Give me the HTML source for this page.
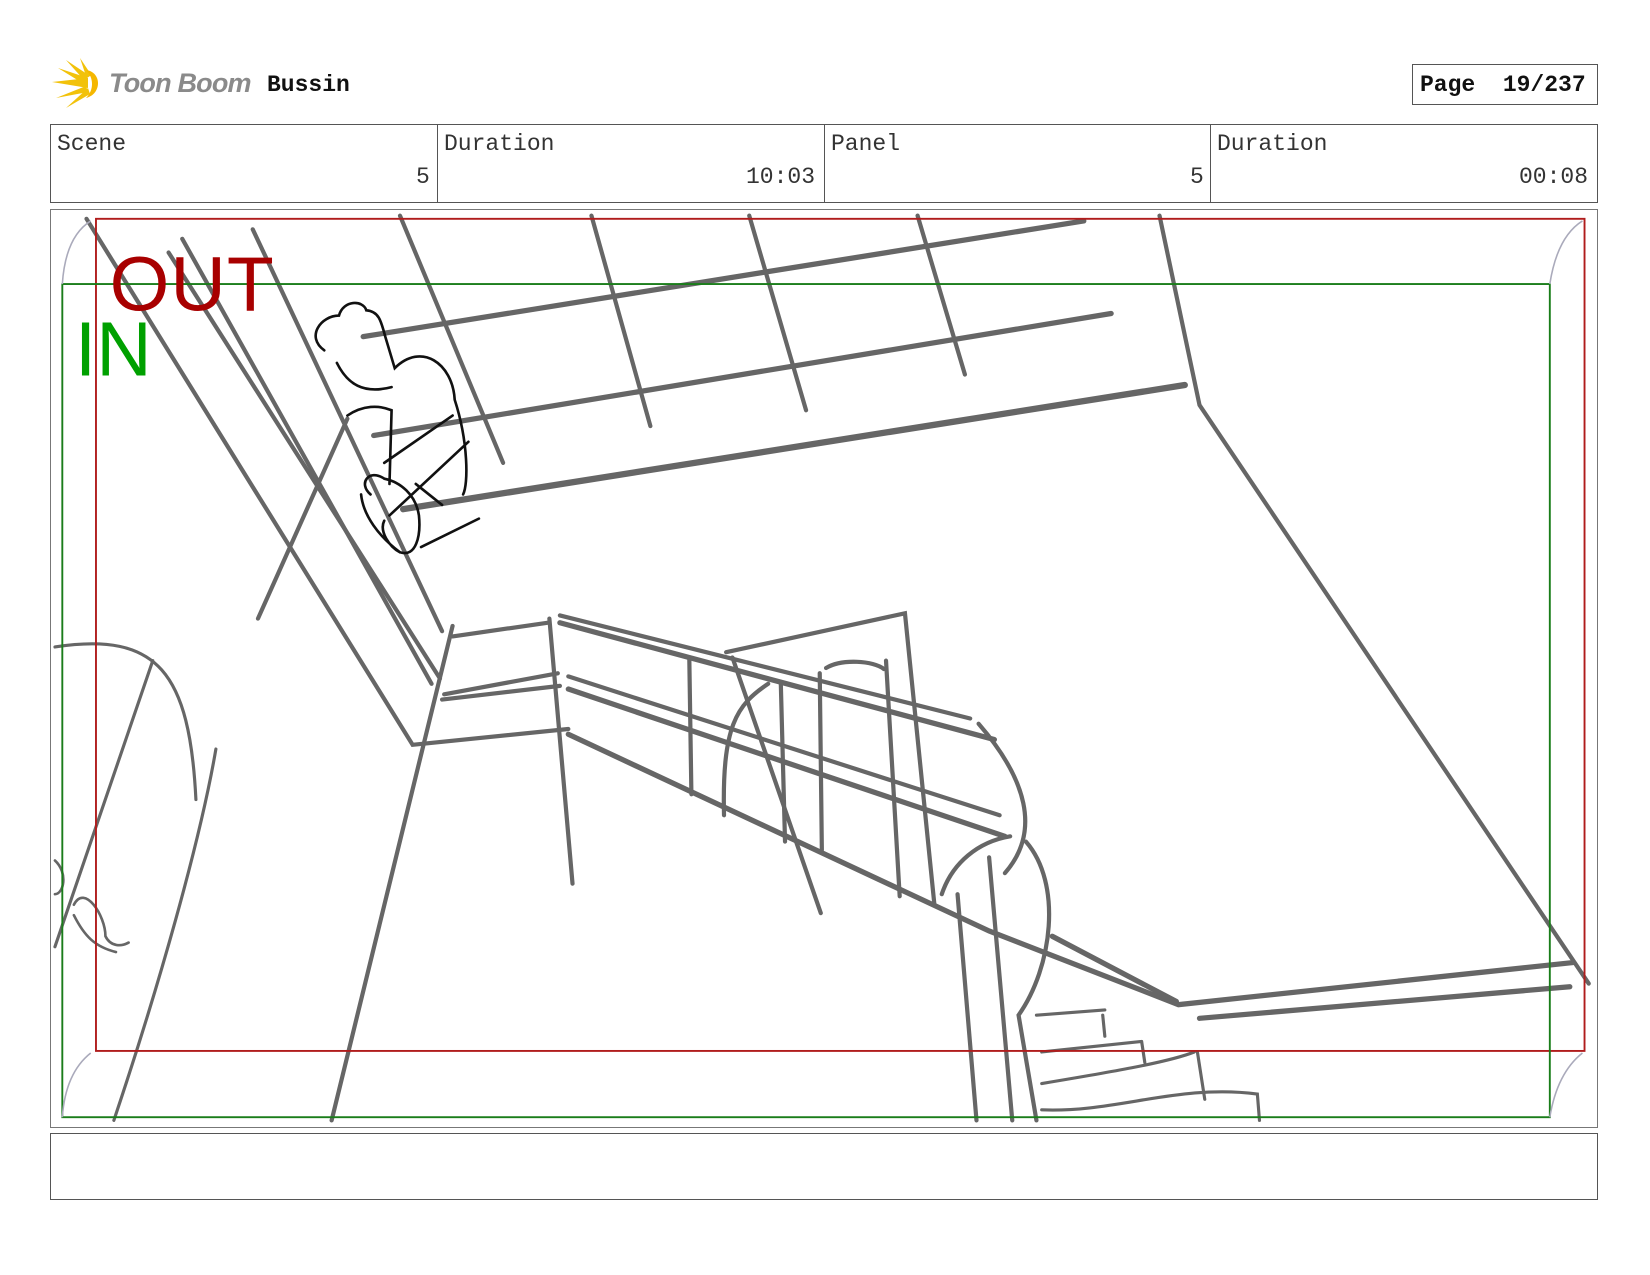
<!DOCTYPE html>
<html><head><meta charset="utf-8"><style>
body{margin:0;width:1650px;height:1275px;background:#fff;position:relative;overflow:hidden;font-family:"Liberation Mono",monospace}
.a{position:absolute}
.box{position:absolute;border:1px solid #555;box-sizing:border-box}
.lbl{position:absolute;font-size:23px;color:#333}
</style></head><body>
<svg class="a" style="left:52px;top:58px" width="52" height="54" viewBox="0 0 52 54">
<g fill="#f2c20a"><polygon points="0,24 36,20 36,30"/><polygon points="6,10 36,20 32,26"/><polygon points="14,2 38,18 32,22"/><polygon points="4,40 34,28 36,34"/><polygon points="14,50 36,30 38,36"/><polygon points="28,0 40,18 34,18"/></g>
<path d="M34 12 C50 14 50 36 34 40 C42 32 42 20 34 12Z" fill="#f5b700"/>
</svg>
<div class="a" style="left:109px;top:68px;font-family:'Liberation Sans',sans-serif;font-style:italic;font-weight:bold;font-size:27px;color:#8a8a8a;letter-spacing:-0.8px">Toon Boom</div>
<div class="a" style="left:267px;top:72px;font-size:23px;font-weight:bold;color:#111">Bussin</div>
<div class="box" style="left:1412px;top:64px;width:186px;height:41px"></div>
<div class="a" style="left:1420px;top:72px;font-size:23px;font-weight:bold;color:#111">Page&nbsp;&nbsp;19/237</div>
<div class="box" style="left:50px;top:124px;width:1548px;height:79px"></div>
<div class="a" style="left:437px;top:124px;width:1px;height:79px;background:#555"></div>
<div class="a" style="left:824px;top:124px;width:1px;height:79px;background:#555"></div>
<div class="a" style="left:1210px;top:124px;width:1px;height:79px;background:#555"></div>
<div class="lbl" style="left:57px;top:131px">Scene</div>
<div class="lbl" style="left:444px;top:131px">Duration</div>
<div class="lbl" style="left:831px;top:131px">Panel</div>
<div class="lbl" style="left:1217px;top:131px">Duration</div>
<div class="lbl" style="left:416px;top:164px">5</div>
<div class="lbl" style="left:746px;top:164px">10:03</div>
<div class="lbl" style="left:1190px;top:164px">5</div>
<div class="lbl" style="left:1519px;top:164px">00:08</div>
<div class="box" style="left:50px;top:209px;width:1548px;height:919px;border-color:#777"></div>
<div class="box" style="left:50px;top:1133px;width:1548px;height:67px"></div>
<svg class="a" style="left:0;top:0" width="1650" height="1275" viewBox="0 0 1568 1212">
<defs><clipPath id="c"><rect x="49" y="199" width="1469" height="871"/></clipPath></defs>
<g clip-path="url(#c)" fill="none" stroke="#666" stroke-width="4" stroke-linecap="round">
<path d="M82 208 L392 708 L540 693"/>
<path d="M173 227 L410 650"/><path d="M160 240 L418 645"/><path d="M240 218 L420 600"/>
<path d="M380 205 L478 440"/><path d="M562 205 L618 405"/><path d="M712 205 L766 390"/><path d="M872 205 L917 356"/>
<path d="M1102 205 L1140 385 L1510 935"/>
<path d="M345 320 L1030 210" stroke-width="5"/><path d="M355 414 L1056 298" stroke-width="5"/><path d="M383 484 L1126 366" stroke-width="6"/>
<path d="M330 398 L245 588"/>
<path d="M430 595 L315 1065"/><path d="M522 588 L544 840"/>
<path d="M430 605 L520 592"/><path d="M422 660 L530 640"/><path d="M420 665 L532 652"/>
<path d="M532 585 L922 683"/><path d="M532 592 L945 703" stroke-width="5"/>
<path d="M540 643 L950 775"/><path d="M540 655 L955 795" stroke-width="5"/>
<path d="M540 698 L940 885 L1120 955 L1495 915" stroke-width="5"/>
<path d="M1000 890 L1118 952 M1140 968 L1492 938" stroke-width="5"/>
<path d="M690 620 L860 583 L888 860"/><path d="M655 625 L657 755"/><path d="M696 625 L780 868"/>
<path d="M730 650 C700 670 686 690 688 775"/><path d="M742 650 L746 800"/>
<path d="M779 640 L781 808"/><path d="M785 635 C800 626 830 628 840 636"/><path d="M842 628 L855 852"/>
<path d="M930 688 C975 740 990 790 955 830 M895 850 C905 820 930 800 960 795 M940 815 L962 1065 M910 850 L928 1065"/>
<path d="M975 800 C1010 840 1000 920 968 965 L985 1065"/>
<path d="M985 965 L1050 960 M1048 965 L1050 985 M990 1000 L1085 990 M1085 990 L1088 1010 M990 1030 C1050 1020 1110 1010 1135 1000 M1138 1000 L1145 1045 M990 1055 C1060 1058 1120 1030 1195 1040 L1197 1065" stroke-width="3"/>
<path d="M52 615 C150 600 180 640 186 760 M205 712 C190 800 150 940 108 1065 M145 628 L52 900" stroke-width="3"/>
<path d="M70 860 C80 840 100 870 100 890 C105 900 115 900 122 896 M52 818 C65 830 60 850 52 850 M70 870 C80 890 90 900 110 905" stroke-width="2.5"/>
</g>
<g fill="none" stroke="#111" stroke-width="2.5" stroke-linecap="round" clip-path="url(#c)">
<path d="M308 333 C290 320 305 300 322 300 C326 285 345 285 348 295 C360 296 362 305 366 320 L375 350 C400 325 430 345 432 380 C445 420 445 460 440 470 M320 345 C330 365 345 375 372 368 M330 395 C345 385 360 385 372 390 L370 460 M365 440 L430 395 M370 490 L445 420 M352 470 C340 460 350 445 365 455 C380 458 395 470 398 490 C400 510 395 530 380 525 C370 520 360 505 365 495 M400 520 L455 493 M343 470 C345 490 360 510 380 525 M395 460 L420 480"/>
</g>
<rect x="91" y="208" width="1415" height="791" fill="none" stroke="#b01c1c" stroke-width="1.8"/>
<rect x="59" y="270" width="1414" height="792" fill="none" stroke="#1a7d1a" stroke-width="1.8"/>
<g fill="none" stroke="#aab" stroke-width="1.5"><path d="M59 270 Q62 225 86 210"/><path d="M1473 270 Q1480 225 1504 210"/><path d="M59 1062 Q62 1020 86 1001"/><path d="M1473 1062 Q1480 1020 1504 1001"/></g>
<text x="104" y="295" font-family="Liberation Sans,sans-serif" font-size="73" fill="#a80000" letter-spacing="1">OUT</text>
<text x="71" y="357" font-family="Liberation Sans,sans-serif" font-size="73" fill="#00a000">IN</text>
</svg>
</body></html>
